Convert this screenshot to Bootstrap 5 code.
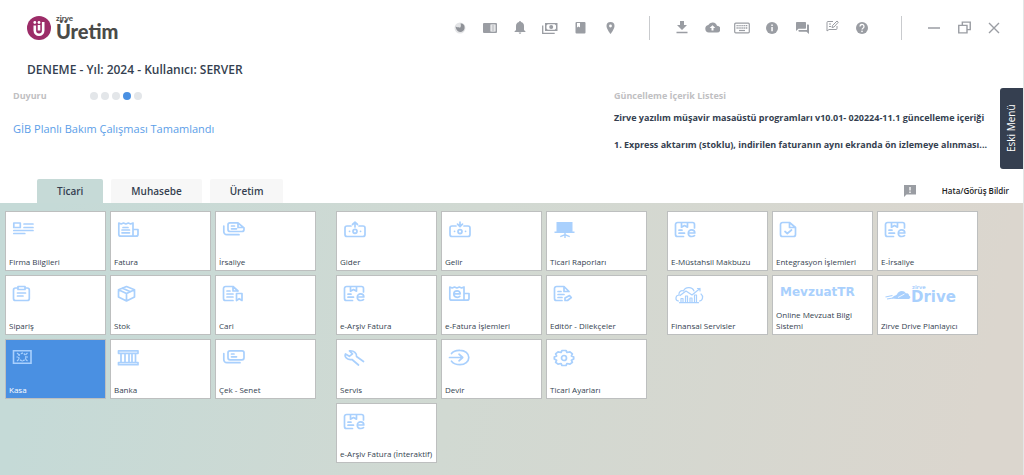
<!DOCTYPE html>
<html lang="tr">
<head>
<meta charset="utf-8">
<meta name="viewport" content="width=device-width, initial-scale=1">
<title>Zirve Üretim</title>
<link rel="stylesheet" href="https://cdn.jsdelivr.net/npm/bootstrap@5.3.0/dist/css/bootstrap.min.css">
<style>
  body { font-family: "Open Sans", "Noto Sans", sans-serif; font-size: 8px; line-height: 12px; color: #353f50; background: #fff; }
  .shell { min-height: 100vh; border-right: 1px solid #e3e6e6; }
  .topbar { height: 55px; padding-left: 27px; padding-right: 14px; }
  .brand-text { color: #4a4a48; font-family: Lato, sans-serif; margin-left: 5px; }
  .brand-small { font-size: 8px; font-weight: 700; line-height: 6px; }
  .brand-big { font-size: 20px; font-weight: 900; line-height: 20px; }
  .tool { width: 30px; height: 30px; padding: 0; border: 0; background: none; color: #9a9da3; display: flex; align-items: center; justify-content: center; }
  .rule { width: 1px; height: 24px; background: #c9cbce; margin: 0 17px 0 24px; }
  .account { font-size: 12px; line-height: 18px; font-weight: 650; padding: 6px 0 0 27px; }
  .info { height: 100px; padding: 9px 30px 0 13px; }
  .muted-title { font-size: 9px; line-height: 16px; font-weight: 700; color: #bfc0c2; }
  .dots { gap: 3px; margin-left: 43px; }
  .dot { width: 8px; height: 8px; border-radius: 50%; background: #e3e6e9; border: 0; padding: 0; }
  .dot.on { background: #4a90e2; }
  .notice { font-size: 11px; line-height: 18px; color: #5b9ee8; text-decoration: none; }
  .news { width: 379px; font-size: 9px; font-weight: 700; }
  .news p { margin: 5px 0 9px; line-height: 18px; white-space: nowrap; }
  .old-menu { position: absolute; right: 0; top: 88px; width: 23px; height: 81px; border: 0; border-radius: 3px 0 0 3px; background: #353f50; color: #fff; font-size: 10px; writing-mode: vertical-rl; padding: 0; }
  .old-menu span { display: block; transform: rotate(180deg); width: 23px; line-height: 23px; text-align: center; height: 81px; }
  .tabs { padding: 0 14px 0 37px; gap: 8px; }
  .tabs .nav-link { height: 24px; padding: 0 20px; border: 0; border-radius: 2px 2px 0 0; background: #f7f7f7; color: #353f50; font-size: 10px; line-height: 24px; font-weight: 600; }
  .tabs .nav-link.active { background: #c6dad7; }
  .report { font-size: 8px; line-height: 24px; color: #222; font-weight: 600; border: 0; background: none; padding: 0; gap: 26px; }
  .board { background: linear-gradient(100deg, #c5dad7 5%, #d1d9d2 45%, #dbd6ce 95%); padding: 8px 5px 12px; gap: 20px; }
  .tiles { display: grid; grid-template-columns: repeat(3, 101px); grid-auto-rows: 60px; gap: 4px; }
  .tile { display: flex; flex-direction: column; justify-content: space-between; border: 1px solid #bdbfbf; background: #fff; color: #353f50; text-decoration: none; padding: 9px 3px 3px; line-height: 11px; font-weight: 500; white-space: nowrap; }
  .tile.on { background: #4a90e2; color: #fff; }
  .tile svg { margin-left: 3px; color: #a9d0fd; display: block; flex: none; }
  .ln { fill: none; stroke: currentColor; stroke-width: 1.7; stroke-linecap: round; stroke-linejoin: round; }
  .wordmark { fill: currentColor; font-family: "DejaVu Sans", sans-serif; font-weight: 700; }
</style>
</head>
<body>
<svg class="d-none">
  <symbol id="i-firm" viewBox="0 0 24 18"><g class="ln"><path d="M1.800 2h6.500v4.500H1.800zM12 3h9M12 6.500h9M1.800 9.500H21M1.800 12.500h11"/></g></symbol>
  <symbol id="i-invoice" viewBox="0 0 24 18"><g class="ln"><path d="M16 15.200H3.800a2 2 0 0 1-2-2V2l2.400 1 2.300-1 2.400 1 2.400-1 2.300 1L16 2v13.200h3a2 2 0 0 0 2-2V8.500h-5M6 6.500h5M5 9h7.500M5 11.800h7.500"/></g></symbol>
  <symbol id="i-waybill" viewBox="0 0 24 18"><g class="ln"><path d="M8 1.800h8l6 5v1.700a2 2 0 0 1-2 2H8a2 2 0 0 1-2-2V3.800a2 2 0 0 1 2-2zM16 2v4.500h5M9.500 5h3M9.500 7.800h5M1.800 5v5.500a3 3 0 0 0 3 3.200H17"/></g></symbol>
  <symbol id="i-order" viewBox="0 0 24 18"><g class="ln"><path d="M6 3H3.500a2 2 0 0 0-2 2v8.500a2 2 0 0 0 2 2h11.800a2 2 0 0 0 2-2V5a2 2 0 0 0-2-2H13M6 1.500h7V4.500H6zM5.500 8h8M5.500 11h5.500"/></g></symbol>
  <symbol id="i-box" viewBox="0 0 24 18"><g class="ln"><path d="M9.500 1.500L17.500 4.800v7.200L9.500 16l-8-4V4.800zM1.500 4.800l8 3.700 8-3.700M9.500 8.500V16M5.500 3.200l8 3.500"/></g></symbol>
  <symbol id="i-account" viewBox="0 0 24 18"><g class="ln"><path d="M11 15.500H3.500a2 2 0 0 1-2-2V3.500a2 2 0 0 1 2-2h7.500l5 4.500M11 1.800V6h5M5 6h3M5 9h6M5 12h6M14.500 8.500h5.500v7l-2.800-1.800-2.700 1.800z"/></g></symbol>
  <symbol id="i-safe" viewBox="0 0 24 18"><g fill="none" stroke="currentColor"><path d="M1.500 1.800h17.500v12.500H1.500z" stroke-width="1.600"/><circle cx="10.300" cy="8" r="3.600" stroke-dasharray="2 1" stroke-width="1.300"/><path d="M5 4l2 1.700M15.500 4l-2 1.700M5 12l2-1.700M15.500 12l-2-1.700M4.500 8H6M14.500 8H16M10.300 3.400v1M10.300 11.500v1" stroke-width="1.200"/></g></symbol>
  <symbol id="i-bank" viewBox="0 0 24 18"><g class="ln"><path d="M1.500 1.800H21v2.500H1.500zM1.500 13.500H21v2.200H1.500zM4 4.500v9M8 4.500v9M12 4.500v9M15 4.500v9M18.500 4.500v9"/></g></symbol>
  <symbol id="i-cheque" viewBox="0 0 24 18"><g class="ln"><rect x="6" y="1.800" width="16" height="9" rx="2"/><path d="M9.500 5h2.500M9.500 7.800h5M1.800 4.500v6a3 3 0 0 0 3 3.200H18"/></g></symbol>
  <symbol id="i-out" viewBox="0 0 24 18"><g class="ln"><path d="M8 5H4a2 2 0 0 0-2 2v6.500a2 2 0 0 0 2 2h16a2 2 0 0 0 2-2V7a2 2 0 0 0-2-2h-4M12 6V1.500M9.500 3.500L12 1.200l2.500 2.300"/><circle cx="12" cy="10.300" r="2"/><path d="M6.500 10.300h.1M17.500 10.300h.1"/></g></symbol>
  <symbol id="i-in" viewBox="0 0 24 18"><g class="ln"><path d="M8 5H4a2 2 0 0 0-2 2v6.500a2 2 0 0 0 2 2h16a2 2 0 0 0 2-2V7a2 2 0 0 0-2-2h-4M12 1.200v4M9.500 3.200L12 5.500l2.500-2.300"/><circle cx="12" cy="10.600" r="2"/><path d="M6.500 10.300h.1M17.500 10.300h.1"/></g></symbol>
  <symbol id="i-report" viewBox="0 0 24 18"><path d="M3.500 1h16v9.500h2V12h-8.800v1.300l4.300 1.700-.5 1.200-3.800-1.400V17h-1.400v-2.200L7.500 16.200 7 15l4.300-1.700V12H1.500v-1.500h2z" fill="currentColor"/></symbol>
  <symbol id="i-earch" viewBox="0 0 24 18"><g class="ln"><path d="M9.500 15.500H3.500a2 2 0 0 1-2-2v-10a2 2 0 0 1 2-2h15a2 2 0 0 1 2 2V7M7.500 2v4.200l3-1.700 3 1.700V2M5 9.200h3M5 12.200h5.500"/><path d="M14.300 12h6.500c0-2-1.300-3.200-3.200-3.200s-3.300 1.400-3.300 3.400 1.400 3.300 3.500 3.300c1.100 0 2-.3 2.700-.9"/></g></symbol>
  <symbol id="i-einv" viewBox="0 0 24 18"><g class="ln"><path d="M16 15.200H3.800a2 2 0 0 1-2-2V2l2.400 1 2.300-1 2.400 1 2.400-1 2.300 1L16 2v13.200h3a2 2 0 0 0 2-2V8.500h-5"/><path d="M5.800 8.800h6.400c0-2-1.300-3-3.100-3S5.800 7.200 5.800 9.100s1.400 3.200 3.400 3.200c1.100 0 2-.3 2.600-.9"/></g></symbol>
  <symbol id="i-edit" viewBox="0 0 24 18"><g class="ln"><path d="M9 15.500H3.500a2 2 0 0 1-2-2V3.500a2 2 0 0 1 2-2H11l5 5M11 1.800V6.500h5M5 6.500h3M5 9.500h6M5 12.500h4M12 15.500v-2.500l4.500-2.500 1.800 2-3.800 3z"/></g></symbol>
  <symbol id="i-wrench" viewBox="0 0 24 18"><g class="ln"><path d="M20.500 12.500L13.500 7.500c.5-3-2.500-6.200-7-5.700L9.500 4.800l-3.200 2.500L2.500 5C1 8 4.500 11.300 9 10.500l6.500 5.500"/></g></symbol>
  <symbol id="i-enter" viewBox="0 0 24 18"><g class="ln"><path d="M3.500 4.500C6 1.200 10 1.200 12 1.300c5 0 8.800 3.300 8.800 7.200s-3.800 7.200-8.800 7.200c-3.500 0-6.500-1-8.500-3.500M1.500 8.500h13M11 5.200l3.700 3.300L11 11.800"/></g></symbol>
  <symbol id="i-gear" viewBox="0 0 24 18"><g class="ln"><path d="M9 1.500h4l1 2 3-.6 2.400 2-1 2 2.300 1.200v2l-2.300 1.200 1 2-2.400 1.800-3-.6-1 2H9l-1-2-3 .6-2.400-1.800 1-2L1.300 10.100v-2l2.300-1.200-1-2 2.400-2 3 .6z"/><circle cx="11" cy="9" r="2.500"/></g></symbol>
  <symbol id="i-check" viewBox="0 0 24 18"><g class="ln"><path d="M10.500 1.500h-7a2 2 0 0 0-2 2v10a2 2 0 0 0 2 2h11a2 2 0 0 0 2-2V6.500zM10.500 1.500v5h6M6 10.500l2.300 2L12.500 9"/></g></symbol>
</svg>
<div class="shell d-flex flex-column position-relative">
  <header class="topbar d-flex align-items-center">
    <a href="#" class="d-flex align-items-center text-decoration-none" aria-label="Zirve Üretim">
      <svg width="24" height="24" viewBox="0 0 24 24"><circle cx="12" cy="12" r="12" fill="#9c2c68"/><path d="M7.800 9.500v5a4.200 4.200 0 0 0 8.400 0V6M12 9v5.500" fill="none" stroke="#fff" stroke-width="2.600"/><circle cx="7.800" cy="6.500" r="1.400" fill="#fff"/><circle cx="12" cy="6.500" r="1.400" fill="#fff"/></svg>
      <span class="brand-text d-flex flex-column"><span class="brand-small">zirve</span><span class="brand-big">Üretim</span></span>
    </a>
    <nav class="d-flex align-items-center ms-auto" aria-label="Araçlar">
      <button class="tool" aria-label="Durum"><svg width="12" height="12" viewBox="0 0 12 12"><circle cx="6" cy="6" r="5.500" fill="#e3e4e6"/><path d="M1.500 4.500c2 1.500 3 0 4 1s2-2 1-4c3 0 4.500 2 4 5-1 5-8 5-9-2z" fill="#8f9298"/></svg></button>
      <button class="tool" aria-label="Okuyucu"><svg width="14" height="12" viewBox="0 0 14 12"><rect y="1" width="14" height="10" rx="1" fill="currentColor"/><path d="M7.500 2.500h5v7h-5z" fill="#fff"/><path d="M8.500 4h3M8.500 6h3M8.500 8h3" stroke="currentColor"/></svg></button>
      <button class="tool" aria-label="Bildirimler"><svg width="12" height="13" viewBox="0 0 12 13"><path d="M6 0a1 1 0 0 1 1 1c2 .5 3 2 3 4v4l1.500 1.500v.5H.5v-.5L2 9V5c0-2 1-3.500 3-4a1 1 0 0 1 1-1zM4.700 11.500h2.600a1.300 1.300 0 0 1-2.600 0z" fill="currentColor"/></svg></button>
      <button class="tool" aria-label="Ödeme"><svg width="16" height="12" viewBox="0 0 16 12"><path d="M.7 3.500v7.800h12" fill="none" stroke="currentColor" stroke-width="1.300"/><path d="M3 1h12.500v8H3z" fill="currentColor"/><path d="M4.500 3.500l1.200-1.200h7l1.300 1.200v3l-1.300 1.200h-7L4.500 6.500z" fill="#fff"/><circle cx="9.200" cy="5" r="2" fill="currentColor"/></svg></button>
      <button class="tool" aria-label="Defter"><svg width="11" height="12" viewBox="0 0 10 12"><rect width="10" height="11.500" rx="1" fill="currentColor"/><path d="M1.500 1h3v4.500L3 4.500 1.500 5.500z" fill="#fff"/></svg></button>
      <button class="tool" aria-label="Konum"><svg width="9" height="12" viewBox="0 0 8 12"><path d="M4 0a4 4 0 0 1 4 4c0 3-4 8-4 8S0 7 0 4a4 4 0 0 1 4-4z" fill="currentColor"/><circle cx="4" cy="4" r="1.400" fill="#fff"/></svg></button>
      <span class="rule"></span>
      <button class="tool" aria-label="İndir"><svg width="12" height="13" viewBox="0 0 12 13"><path d="M4 0h4v4h3L6 9 1 4h3zM.5 10.800h11v1.500H.5z" fill="currentColor"/></svg></button>
      <button class="tool" aria-label="Bulut"><svg width="15" height="11" viewBox="0 0 15 11"><path d="M12 3.800A4.700 4.700 0 0 0 3.300 3 3.800 3.800 0 0 0 3.800 10.500H12a3.300 3.300 0 0 0 0-6.700z" fill="currentColor"/><path d="M7.500 3.300L10.300 6H8.500v2.500h-2V6H4.700z" fill="#fff"/></svg></button>
      <button class="tool" aria-label="Klavye"><svg width="16" height="12" viewBox="0 0 16 12"><rect x=".7" y="1.200" width="14.600" height="9.600" rx="1" fill="none" stroke="currentColor" stroke-width="1.200"/><path d="M2.500 3.700h11M2.500 6h11" stroke="currentColor" stroke-width="1.300" stroke-dasharray="1.300 .6"/><path d="M5 8.500h6" stroke="currentColor" stroke-width="1.200"/></svg></button>
      <button class="tool" aria-label="Bilgi"><svg width="12" height="12" viewBox="0 0 12 12"><circle cx="6" cy="6" r="6" fill="currentColor"/><path d="M5.300 2.500h1.500V4H5.300zM5.300 5h1.500v4.300H5.300z" fill="#fff"/></svg></button>
      <button class="tool" aria-label="Mesajlar"><svg width="13" height="12" viewBox="0 0 13 12"><path d="M0 .8Q0 0 .8 0h8.400q.8 0 .8.800V6q0 .8-.8.800H2.500L0 9zM11 2.500h1.200q.8 0 .8.800V12l-2.500-2.300H3.300q-.8 0-.8-.8V8H11z" fill="currentColor"/></svg></button>
      <button class="tool pb-1" aria-label="Not"><svg width="13" height="12" viewBox="0 0 13 12" fill="none" stroke="currentColor"><path d="M7 1.500H2a1 1 0 0 0-1 1V11l2-1.500h7a1 1 0 0 0 1-1V6M3 4h2M3 6.500h2"/><path d="M6 7.500l.5-2L11 1l1.300 1.200L8 7z"/></svg></button>
      <button class="tool" aria-label="Yardım"><svg width="12" height="12" viewBox="0 0 12 12"><circle cx="6" cy="6" r="6" fill="currentColor"/><path d="M4 4.500a2 2 0 1 1 3 1.700Q6 6.800 6 7.600" fill="none" stroke="#fff" stroke-width="1.300"/><circle cx="6" cy="9.400" r=".8" fill="#fff"/></svg></button>
      <span class="rule"></span>
      <button class="tool" aria-label="Küçült"><svg width="12" height="12" viewBox="0 0 12 12"><path d="M0 6h12" stroke="currentColor" stroke-width="1.500"/></svg></button>
      <button class="tool" aria-label="Geri yükle"><svg width="13" height="13" viewBox="0 0 12 12" fill="none" stroke="currentColor" stroke-width="1.300"><path d="M.7 4h7.600v7H.7zM4 4V1h7.300v7h-3"/></svg></button>
      <button class="tool" aria-label="Kapat"><svg width="12" height="12" viewBox="0 0 12 12"><path d="M1 1l10 10M11 1L1 11" stroke="currentColor" stroke-width="1.400"/></svg></button>
    </nav>
  </header>
  <div class="account">DENEME - Yıl: 2024 - Kullanıcı: SERVER</div>
  <section class="info d-flex justify-content-between">
    <div>
      <div class="d-flex align-items-center mb-3"><span class="muted-title">Duyuru</span>
        <span class="dots d-flex"><button class="dot" aria-label="Duyuru 1"></button><button class="dot" aria-label="Duyuru 2"></button><button class="dot" aria-label="Duyuru 3"></button><button class="dot on" aria-label="Duyuru 4"></button><button class="dot" aria-label="Duyuru 5"></button></span></div>
      <a href="#" class="notice d-block">GİB Planlı Bakım Çalışması Tamamlandı</a>
    </div>
    <div class="news">
      <div class="muted-title">Güncelleme İçerik Listesi</div>
      <p>Zirve yazılım müşavir masaüstü programları v10.01- 020224-11.1 güncelleme içeriği</p>
      <p>1. Express aktarım (stoklu), indirilen faturanın aynı ekranda ön izlemeye alınması...</p>
    </div>
  </section>
  <button class="old-menu"><span>Eski Menü</span></button>
  <nav class="tabs nav">
    <button class="nav-link active">Ticari</button>
    <button class="nav-link">Muhasebe</button>
    <button class="nav-link">Üretim</button>
    <button class="report d-flex align-items-center ms-auto"><svg width="12" height="12" viewBox="0 0 12 12"><path d="M0 0h12v9.500H2.500L0 12z" fill="#9a9da3"/><path d="M6 2v3.500M6 6.500V8" stroke="#fff" stroke-width="1.300"/></svg>Hata/Görüş Bildir</button>
  </nav>
  <main class="board d-flex flex-wrap flex-grow-1 align-content-start align-items-start">
    <div class="tiles">
      <a href="#" class="tile"><svg width="24" height="18"><use href="#i-firm"/></svg><span>Firma Bilgileri</span></a>
      <a href="#" class="tile"><svg width="24" height="18"><use href="#i-invoice"/></svg><span>Fatura</span></a>
      <a href="#" class="tile"><svg width="24" height="18"><use href="#i-waybill"/></svg><span>İrsaliye</span></a>
      <a href="#" class="tile"><svg width="24" height="18"><use href="#i-order"/></svg><span>Sipariş</span></a>
      <a href="#" class="tile"><svg width="24" height="18"><use href="#i-box"/></svg><span>Stok</span></a>
      <a href="#" class="tile"><svg width="24" height="18"><use href="#i-account"/></svg><span>Cari</span></a>
      <a href="#" class="tile on"><svg width="24" height="18"><use href="#i-safe"/></svg><span>Kasa</span></a>
      <a href="#" class="tile"><svg width="24" height="18"><use href="#i-bank"/></svg><span>Banka</span></a>
      <a href="#" class="tile"><svg width="24" height="18"><use href="#i-cheque"/></svg><span>Çek - Senet</span></a>
    </div>
    <div class="tiles">
      <a href="#" class="tile"><svg width="24" height="18"><use href="#i-out"/></svg><span>Gider</span></a>
      <a href="#" class="tile"><svg width="24" height="18"><use href="#i-in"/></svg><span>Gelir</span></a>
      <a href="#" class="tile"><svg width="24" height="18"><use href="#i-report"/></svg><span>Ticari Raporları</span></a>
      <a href="#" class="tile"><svg width="24" height="18"><use href="#i-earch"/></svg><span>e-Arşiv Fatura</span></a>
      <a href="#" class="tile"><svg width="24" height="18"><use href="#i-einv"/></svg><span>e-Fatura İşlemleri</span></a>
      <a href="#" class="tile"><svg width="24" height="18"><use href="#i-edit"/></svg><span>Editör - Dilekçeler</span></a>
      <a href="#" class="tile"><svg width="24" height="18"><use href="#i-wrench"/></svg><span>Servis</span></a>
      <a href="#" class="tile"><svg width="24" height="18"><use href="#i-enter"/></svg><span>Devir</span></a>
      <a href="#" class="tile"><svg width="24" height="18"><use href="#i-gear"/></svg><span>Ticari Ayarları</span></a>
      <a href="#" class="tile"><svg width="24" height="18"><use href="#i-earch"/></svg><span>e-Arşiv Fatura (İnteraktif)</span></a>
    </div>
    <div class="tiles">
      <a href="#" class="tile"><svg width="24" height="18"><use href="#i-earch"/></svg><span>E-Müstahsil Makbuzu</span></a>
      <a href="#" class="tile"><svg width="24" height="18"><use href="#i-check"/></svg><span>Entegrasyon İşlemleri</span></a>
      <a href="#" class="tile"><svg width="24" height="18"><use href="#i-earch"/></svg><span>E-İrsaliye</span></a>
      <a href="#" class="tile"><svg width="30" height="20" viewBox="0 0 30 20"><g fill="none" stroke="currentColor" stroke-width="1.200" stroke-linecap="round" stroke-linejoin="round"><path d="M4.500 16C1 15.500 1 10.500 5 10c-.5-3 2-5 4.500-4C11 2 18 1 20 6M27 9c2.500 2 2 6.500-1.500 7"/><path d="M6 10.500l6-4.500 6 4L26 3.500M23.500 3.500H26V6"/><path d="M7 17.500v-4h2v4M11.500 17.500v-6.500h2v6.500M16 17.500v-4.500h2v4.500M20.500 17.500V10h2v7.500M5.500 17.700h19"/></g></svg><span>Finansal Servisler</span></a>
      <a href="#" class="tile text-wrap"><svg width="88" height="18" viewBox="0 0 88 18"><text class="wordmark" x="1" y="11" font-size="12">MevzuatTR</text></svg><span>Online Mevzuat Bilgi Sistemi</span></a>
      <a href="#" class="tile"><svg width="84" height="20" viewBox="0 0 84 20"><path d="M8 13.500c1-3 4-3 5-4 1-4 7-5 9-1 2-1 3 1 3 2 2 .8 2 3.500-1 3.500H13z" fill="currentColor"/><path d="M1.500 12l7-1.500M3 14l6-1" fill="none" stroke="currentColor" stroke-width="1.200"/><path d="M14 12.500l6.500-3.500" stroke="#fff" stroke-width=".8"/><text class="wordmark" x="28" y="4" font-size="5">zirve</text><text class="wordmark" x="27" y="17" font-size="15">Drive</text></svg><span>Zirve Drive Planlayıcı</span></a>
    </div>
  </main>
</div>
<script src="https://cdn.jsdelivr.net/npm/bootstrap@5.3.0/dist/js/bootstrap.bundle.min.js"></script>
</body>
</html>
